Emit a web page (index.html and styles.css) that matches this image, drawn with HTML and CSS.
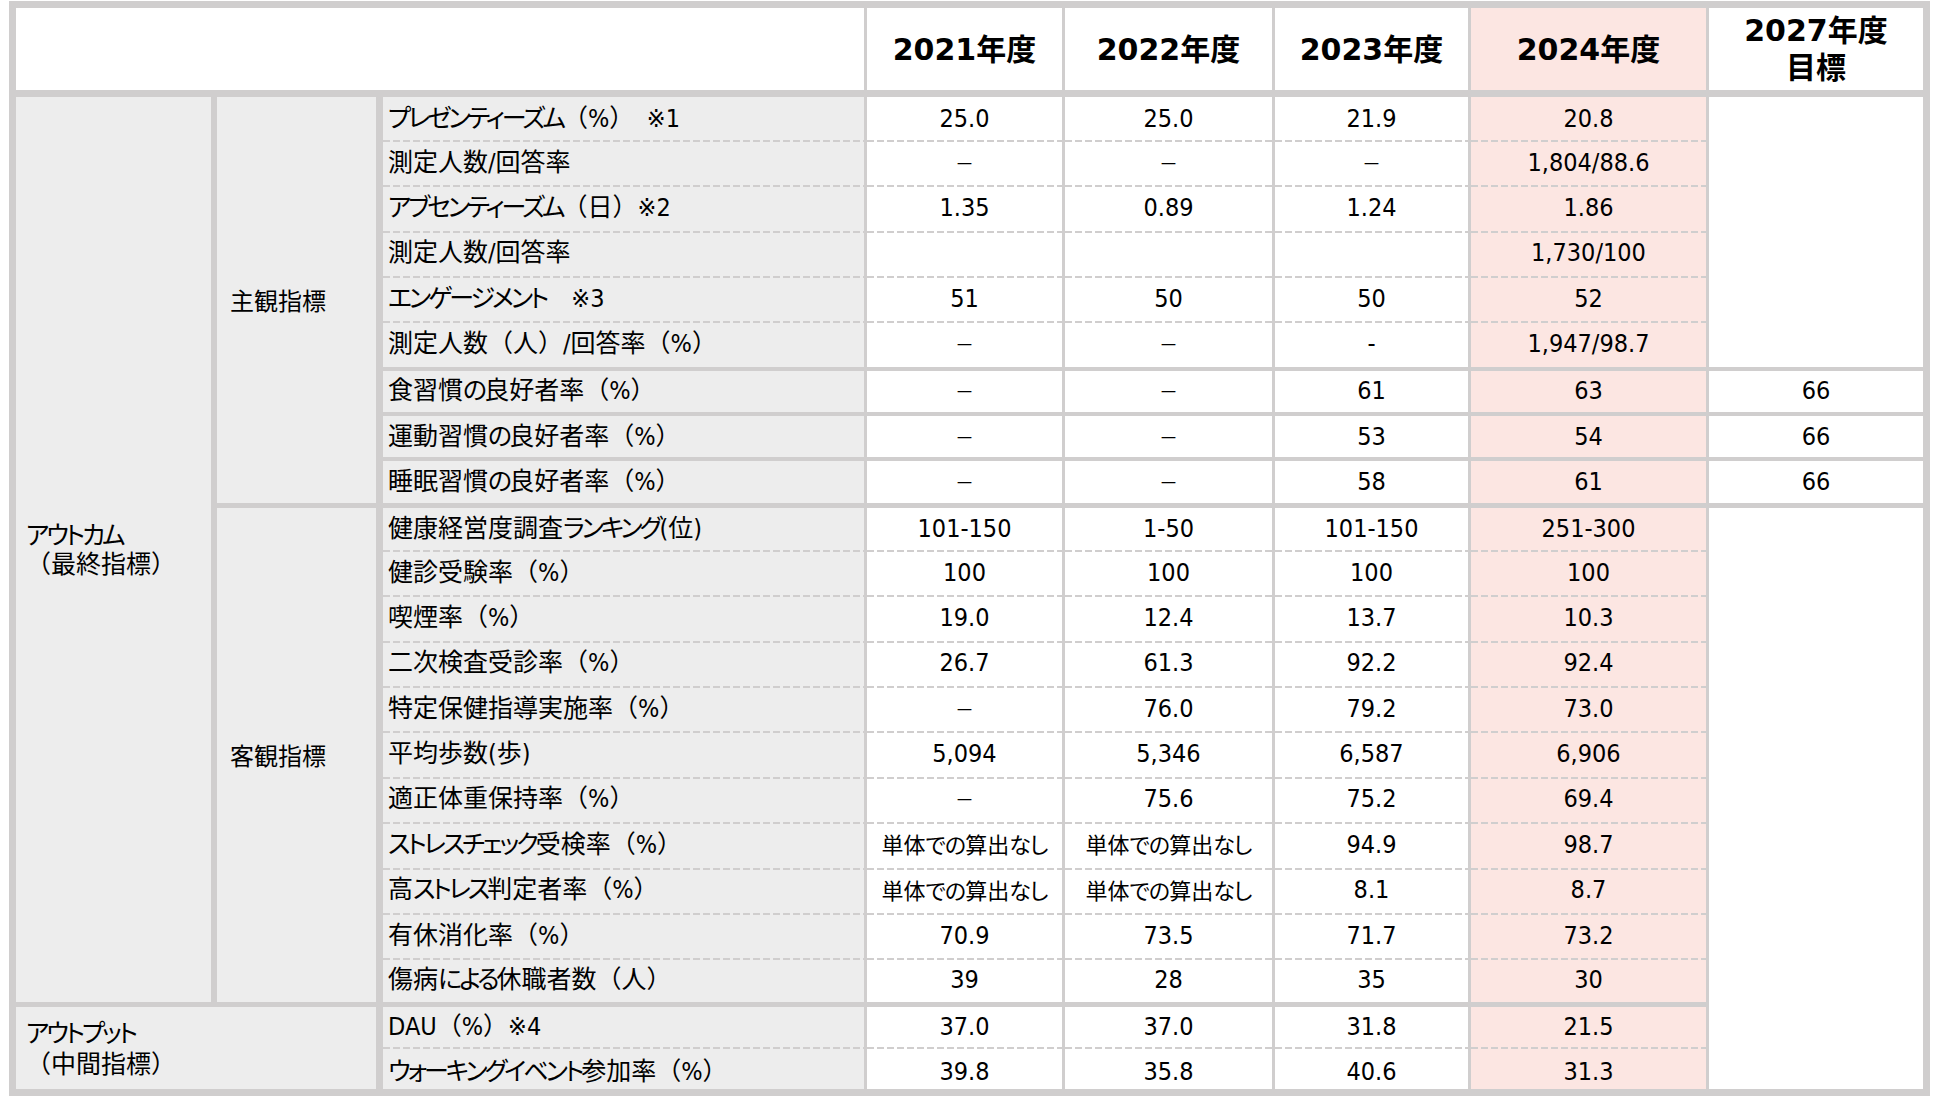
FILE: index.html
```html
<!DOCTYPE html>
<html lang="ja">
<head>
<meta charset="utf-8">
<title>健康経営指標</title>
<link rel="stylesheet" href="styles.css">
</head>
<body>
<div class="sheet">
  <div class="cols head">
    <div class="cell hd-blank"></div>
    <div class="cell hd">2021年度</div>
    <div class="cell hd">2022年度</div>
    <div class="cell hd">2023年度</div>
    <div class="cell hd pink">2024年度</div>
    <div class="cell hd two"><div>2027年度<br>目標</div></div>
  </div>
  <div class="cols body">
    <!-- row 1 -->
    <div class="cell g1"><div><span class="k">アウトカム</span><br>（最終指標）</div></div>
    <div class="cell g2 a">主観指標</div>
    <div class="cell lbl"><span class="k">プレゼンティーズム</span>（%）　※1</div>
    <div class="cell v">25.0</div>
    <div class="cell v">25.0</div>
    <div class="cell v">21.9</div>
    <div class="cell v pink">20.8</div>
    <div class="cell tg top"></div>
    <!-- row 2 -->
    <div class="cell lbl d">測定人数/回答率</div>
    <div class="cell v d"><span class="dash">－</span></div>
    <div class="cell v d"><span class="dash">－</span></div>
    <div class="cell v d"><span class="dash">－</span></div>
    <div class="cell v pink d">1,804/88.6</div>
    <!-- row 3 -->
    <div class="cell lbl d"><span class="k">アブセンティーズム</span>（日）※2</div>
    <div class="cell v d">1.35</div>
    <div class="cell v d">0.89</div>
    <div class="cell v d">1.24</div>
    <div class="cell v pink d">1.86</div>
    <!-- row 4 -->
    <div class="cell lbl d">測定人数/回答率</div>
    <div class="cell v d"></div>
    <div class="cell v d"></div>
    <div class="cell v d"></div>
    <div class="cell v pink d">1,730/100</div>
    <!-- row 5 -->
    <div class="cell lbl d"><span class="k">エンゲージメント</span>　※3</div>
    <div class="cell v d">51</div>
    <div class="cell v d">50</div>
    <div class="cell v d">50</div>
    <div class="cell v pink d">52</div>
    <!-- row 6 -->
    <div class="cell lbl d">測定人数（人）/回答率（%）</div>
    <div class="cell v d"><span class="dash">－</span></div>
    <div class="cell v d"><span class="dash">－</span></div>
    <div class="cell v d">-</div>
    <div class="cell v pink d">1,947/98.7</div>
    <!-- row 7 -->
    <div class="cell lbl s4">食習慣<span class="k">の</span>良好者率（%）</div>
    <div class="cell v s4"><span class="dash">－</span></div>
    <div class="cell v s4"><span class="dash">－</span></div>
    <div class="cell v s4">61</div>
    <div class="cell v pink s4">63</div>
    <div class="cell v tgv s4">66</div>
    <!-- row 8 -->
    <div class="cell lbl s4">運動習慣<span class="k">の</span>良好者率（%）</div>
    <div class="cell v s4"><span class="dash">－</span></div>
    <div class="cell v s4"><span class="dash">－</span></div>
    <div class="cell v s4">53</div>
    <div class="cell v pink s4">54</div>
    <div class="cell v tgv s4">66</div>
    <!-- row 9 -->
    <div class="cell lbl s4">睡眠習慣<span class="k">の</span>良好者率（%）</div>
    <div class="cell v s4"><span class="dash">－</span></div>
    <div class="cell v s4"><span class="dash">－</span></div>
    <div class="cell v s4">58</div>
    <div class="cell v pink s4">61</div>
    <div class="cell v tgv s4">66</div>
    <!-- row 10 -->
    <div class="cell g2 b">客観指標</div>
    <div class="cell lbl s5">健康経営度調査<span class="k">ランキング</span>(位)</div>
    <div class="cell v s5">101-150</div>
    <div class="cell v s5">1-50</div>
    <div class="cell v s5">101-150</div>
    <div class="cell v pink s5">251-300</div>
    <div class="cell tg bottom s5"></div>
    <!-- row 11 -->
    <div class="cell lbl d">健診受験率（%）</div>
    <div class="cell v d">100</div>
    <div class="cell v d">100</div>
    <div class="cell v d">100</div>
    <div class="cell v pink d">100</div>
    <!-- row 12 -->
    <div class="cell lbl d">喫煙率（%）</div>
    <div class="cell v d">19.0</div>
    <div class="cell v d">12.4</div>
    <div class="cell v d">13.7</div>
    <div class="cell v pink d">10.3</div>
    <!-- row 13 -->
    <div class="cell lbl d">二次検査受診率（%）</div>
    <div class="cell v d">26.7</div>
    <div class="cell v d">61.3</div>
    <div class="cell v d">92.2</div>
    <div class="cell v pink d">92.4</div>
    <!-- row 14 -->
    <div class="cell lbl d">特定保健指導実施率（%）</div>
    <div class="cell v d"><span class="dash">－</span></div>
    <div class="cell v d">76.0</div>
    <div class="cell v d">79.2</div>
    <div class="cell v pink d">73.0</div>
    <!-- row 15 -->
    <div class="cell lbl d">平均歩数(歩)</div>
    <div class="cell v d">5,094</div>
    <div class="cell v d">5,346</div>
    <div class="cell v d">6,587</div>
    <div class="cell v pink d">6,906</div>
    <!-- row 16 -->
    <div class="cell lbl d">適正体重保持率（%）</div>
    <div class="cell v d"><span class="dash">－</span></div>
    <div class="cell v d">75.6</div>
    <div class="cell v d">75.2</div>
    <div class="cell v pink d">69.4</div>
    <!-- row 17 -->
    <div class="cell lbl d"><span class="k">ストレスチェック</span>受検率（%）</div>
    <div class="cell v jp d">単体<span class="k">での</span>算出<span class="k">なし</span></div>
    <div class="cell v jp d">単体<span class="k">での</span>算出<span class="k">なし</span></div>
    <div class="cell v d">94.9</div>
    <div class="cell v pink d">98.7</div>
    <!-- row 18 -->
    <div class="cell lbl d">高<span class="k">ストレス</span>判定者率（%）</div>
    <div class="cell v jp d">単体<span class="k">での</span>算出<span class="k">なし</span></div>
    <div class="cell v jp d">単体<span class="k">での</span>算出<span class="k">なし</span></div>
    <div class="cell v d">8.1</div>
    <div class="cell v pink d">8.7</div>
    <!-- row 19 -->
    <div class="cell lbl d">有休消化率（%）</div>
    <div class="cell v d">70.9</div>
    <div class="cell v d">73.5</div>
    <div class="cell v d">71.7</div>
    <div class="cell v pink d">73.2</div>
    <!-- row 20 -->
    <div class="cell lbl d">傷病<span class="k">による</span>休職者数（人）</div>
    <div class="cell v d">39</div>
    <div class="cell v d">28</div>
    <div class="cell v d">35</div>
    <div class="cell v pink d">30</div>
    <!-- row 21 -->
    <div class="cell g12"><div><span class="k">アウトプット</span><br>（中間指標）</div></div>
    <div class="cell lbl s5">DAU（%）※4</div>
    <div class="cell v s5">37.0</div>
    <div class="cell v s5">37.0</div>
    <div class="cell v s5">31.8</div>
    <div class="cell v pink s5">21.5</div>
    <!-- row 22 -->
    <div class="cell lbl d last"><span class="k">ウォーキングイベント</span>参加率（%）</div>
    <div class="cell v d last">39.8</div>
    <div class="cell v d last">35.8</div>
    <div class="cell v d last">40.6</div>
    <div class="cell v pink d last">31.3</div>
  </div>
</div>
</body>
</html>
```

FILE: styles.css
```css
html, body {
  background: #ffffff;
}

body {
  margin: 1px 0 0 9px;
}

.sheet {
  width: 1921px;
  box-sizing: border-box;
  padding: 7px;
  background: #d0cece;
  display: flex;
  flex-direction: column;
  gap: 7px;
  color: #000000;
  font-family: "Noto Sans CJK JP", sans-serif;
}

.cols {
  display: grid;
  grid-template-columns: 198px 163px 481px 195px 207px 193px 235px 214px;
  column-gap: 3px;
}

.head {
  grid-template-rows: 82px;
}

.body {
  grid-template-rows: 43px repeat(8, 45.35px) 47.35px repeat(9, 45.35px) 43.35px 45px 42.35px;
}

.cell {
  display: flex;
  align-items: center;
  background-color: #ffffff;
  min-width: 0;
  box-sizing: border-box;
  white-space: nowrap;
}

.k {
  font-feature-settings: "palt" 1;
  letter-spacing: -3px;
}

/* header */
.hd-blank {
  grid-column: 1 / 4;
}

.hd {
  justify-content: center;
  text-align: center;
  font-family: "DejaVu Sans", "Noto Sans CJK JP", sans-serif;
  font-weight: 700;
  font-size: 30px;
  line-height: 37px;
}

.pink {
  background-color: #fce6e2;
}

/* group columns */
.g1,
.g12 {
  background-color: #ededed;
  padding-left: 10px;
  font-family: "DejaVu Sans Condensed", "DejaVu Sans", "Noto Sans CJK JP", sans-serif;
  font-stretch: condensed;
  font-size: 25px;
}

.g1 {
  grid-column: 1;
  grid-row: span 20;
  margin-right: 3px;
  line-height: 29.5px;
  padding-top: 2px;
}

.g12 {
  grid-column: 1 / 3;
  grid-row: span 2;
  margin-right: 4px;
  margin-top: 5px;
  line-height: 31px;
  padding-top: 2px;
}

.g2 {
  grid-column: 2;
  margin-right: 4px;
  background-color: #ededed;
  padding-left: 13px;
  font-size: 24px;
}

.g2.a {
  grid-row: span 9;
}

.g2.b {
  grid-row: span 11;
  margin-top: 5px;
}

/* labels */
.lbl {
  grid-column: 3;
  background-color: #ededed;
  padding-left: 5px;
  font-family: "DejaVu Sans Condensed", "DejaVu Sans", "Noto Sans CJK JP", sans-serif;
  font-stretch: condensed;
  font-size: 25px;
  line-height: 30px;
}

/* values */
.v {
  justify-content: center;
  font-family: "DejaVu Sans Condensed", "DejaVu Sans", "Noto Sans CJK JP", sans-serif;
  font-stretch: condensed;
  font-size: 25px;
  line-height: 30px;
}

.v.jp {
  font-family: "Noto Sans CJK JP", sans-serif;
  font-stretch: normal;
  font-size: 22px;
  padding-bottom: 3px;
}

.v.jp .k {
  letter-spacing: -1px;
}

.dash {
  font-family: "Noto Sans CJK JP", sans-serif;
  font-size: 19px;
}

.last {
  padding-top: 8px;
}

/* target column */
.tg {
  grid-column: 8;
}

.tg.top {
  grid-row: span 6;
}

.tg.bottom {
  grid-row: span 13;
}

.tgv {
  grid-column: 8;
}

/* row separators */
.d {
  background-image: linear-gradient(to right, #d0cece 7px, transparent 7px);
  background-size: 10px 2px;
  background-repeat: repeat-x;
  background-position: 0 0;
}

.s4 {
  margin-top: 4px;
}

.s5 {
  margin-top: 5px;
}
```
